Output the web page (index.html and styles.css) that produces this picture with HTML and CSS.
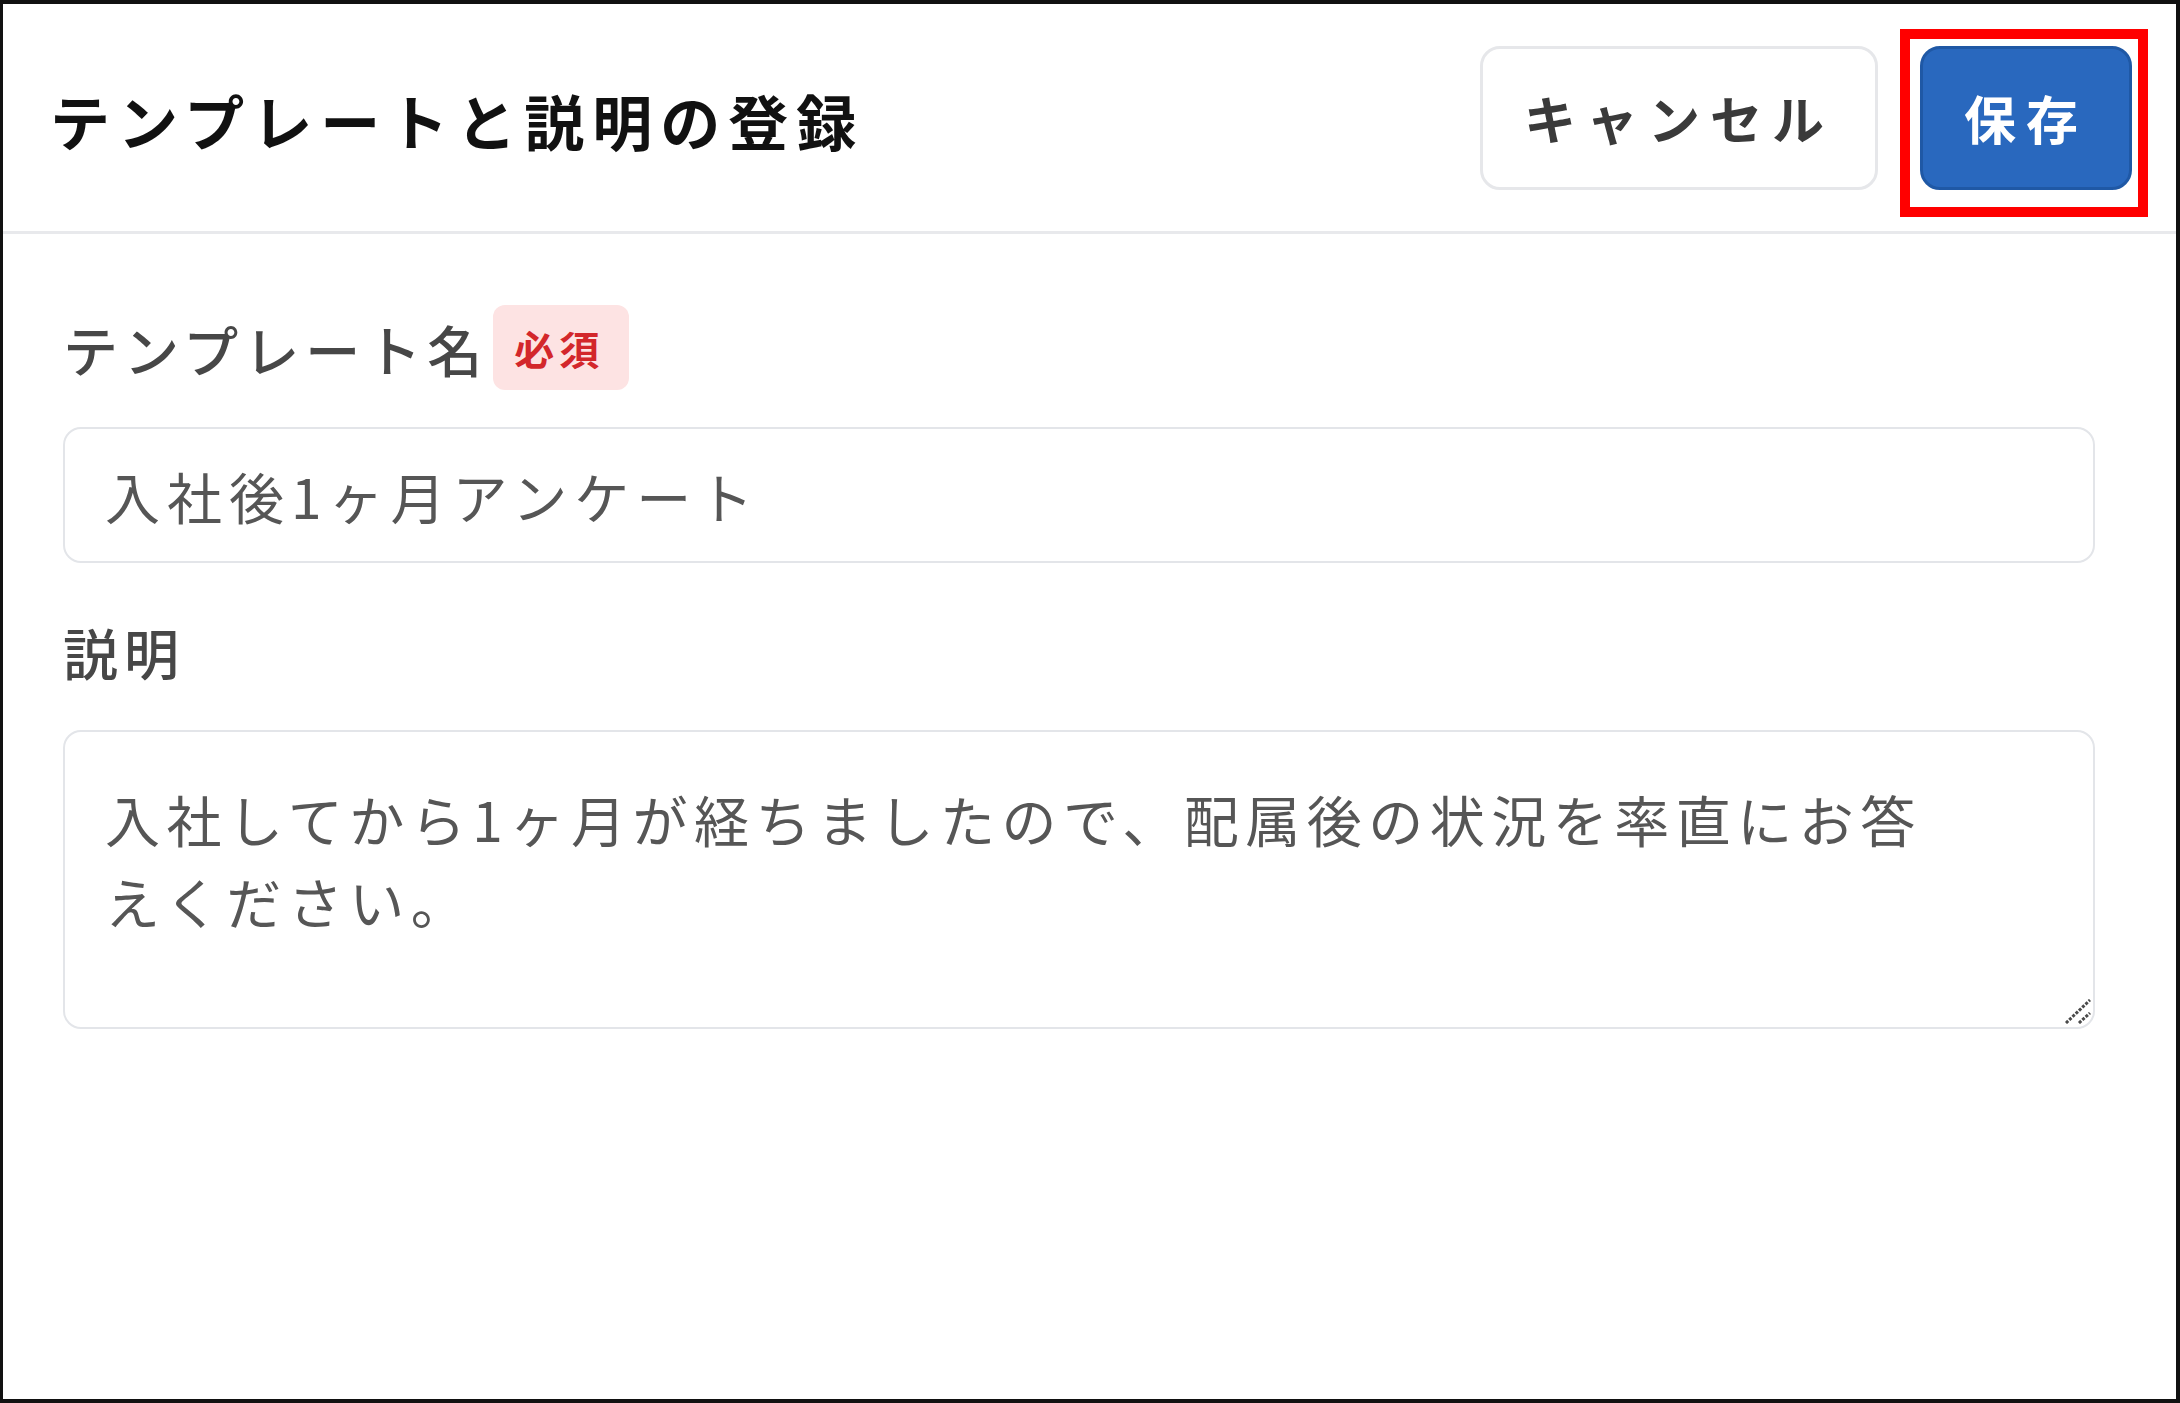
FILE: index.html
```html
<!DOCTYPE html>
<html lang="ja">
<head>
  <meta charset="UTF-8" />
  <meta name="viewport" content="width=device-width, initial-scale=1" />
  <title>テンプレートと説明の登録</title>
  <link rel="stylesheet" href="styles.css">
</head>
<body>
  <div class="dialog">
    <header class="dialog-header">
      <h1 class="dialog-title">テンプレートと説明の登録</h1>
      <div class="actions">
        <button class="btn btn-cancel" type="button">キャンセル</button>
        <span class="save-wrap">
          <button class="btn btn-save" type="button">保存</button>
          <!-- annotation frame -->
          <span class="highlight"></span>
        </span>
      </div>
    </header>

    <main class="dialog-body">
      <div class="field">
        <label class="field-label" for="templateName">
          <span>テンプレート名</span>
          <span class="badge">必須</span>
        </label>
        <input id="templateName" class="text-input" type="text" value="入社後1ヶ月アンケート" />
      </div>

      <div class="field field-desc">
        <label class="field-label" for="templateDesc">説明</label>
        <div class="textarea-wrap">
          <textarea id="templateDesc" class="text-area">入社してから1ヶ月が経ちましたので、配属後の状況を率直にお答えください。</textarea>
          <svg class="grip" width="26" height="25" viewBox="0 0 26 25">
            <line x1="1" y1="24" x2="25" y2="1" />
            <line x1="14" y1="24" x2="25" y2="14" />
          </svg>
        </div>
      </div>
    </main>
  </div>
</body>
</html>
```

FILE: styles.css
```css
* {
  box-sizing: border-box;
}

body {
  margin: 0;
  background: #fff;
  font-family: "Noto Sans CJK JP", "Noto Sans", sans-serif;
  color: #222;
}

.dialog {
  height: 1403px;
  border: 4px solid #111;
  border-left-width: 3px;
  display: flex;
  flex-direction: column;
}

/* Header */
.dialog-header {
  height: 230px;
  flex-shrink: 0;
  display: flex;
  align-items: center;
  justify-content: space-between;
  padding: 0 44px 0 47px;
  border-bottom: 3px solid #e8e9ec;
}

.dialog-title {
  margin: 0;
  font-size: 60px;
  font-weight: 700;
  letter-spacing: 8px;
  color: #111;
  line-height: 1;
  padding-top: 4px;
}

.actions {
  display: flex;
  align-items: center;
  gap: 42px;
}

.btn {
  height: 144px;
  padding: 0 41px;
  font-family: inherit;
  font-size: 52px;
  font-weight: 700;
  letter-spacing: 10px;
  border-radius: 20px;
  cursor: pointer;
}

.btn-cancel {
  background: #fff;
  color: #3a3a3a;
  border: 3px solid #e6e7ea;
}

.btn-save {
  background: #2968be;
  color: #fff;
  border: 3px solid #1f58a5;
}

.save-wrap {
  position: relative;
  display: flex;
}

.highlight {
  position: absolute;
  top: -17px;
  left: -20px;
  right: -16px;
  bottom: -27px;
  border: 10px solid #ff0000;
  pointer-events: none;
}

/* Body */
.dialog-body {
  padding: 71px 81px 0 60px;
}

.field-label {
  display: flex;
  align-items: center;
  gap: 5px;
  height: 85px;
  margin-bottom: 37px;
  font-size: 55px;
  font-weight: 500;
  letter-spacing: 6px;
  color: #474747;
}

.badge {
  display: inline-flex;
  align-items: center;
  height: 85px;
  padding: 0 25px 0 21px;
  background: #fde3e3;
  color: #d3272b;
  font-size: 40px;
  font-weight: 700;
  letter-spacing: 5px;
  border-radius: 12px;
}

.field-desc {
  margin-top: 45px;
}

.text-input,
.text-area {
  display: block;
  width: 100%;
  font-family: inherit;
  font-size: 55px;
  color: #565656;
  background: #fff;
  border: 2px solid #e3e5e9;
  border-radius: 18px;
  outline: none;
}

.text-input {
  height: 136px;
  padding: 0 40px;
  letter-spacing: 7px;
}

.textarea-wrap {
  position: relative;
}

.text-area {
  height: 299px;
  padding: 45px 138px 0 40px;
  line-height: 82px;
  letter-spacing: 6.5px;
  resize: none;
  overflow: hidden;
}

.grip {
  position: absolute;
  right: 4px;
  bottom: 5px;
}

.grip line {
  stroke: #4a4a4a;
  stroke-width: 3;
  stroke-dasharray: 3 1.5;
}
```
